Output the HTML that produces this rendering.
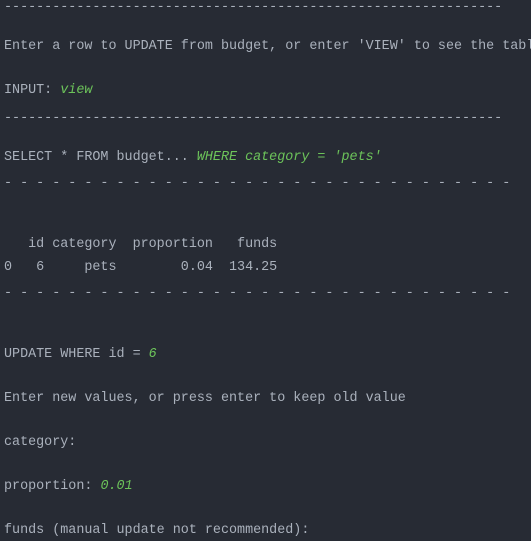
<!DOCTYPE html>
<html><head><style>
body{margin:0;background:#272b34;width:531px;height:541px;overflow:hidden;position:relative}
div{position:absolute;left:4px;white-space:pre;font-family:"Liberation Mono",monospace;font-size:13.4px;line-height:16px;color:#aab1bc}
i{color:#6cc35a}
</style></head><body>
<div style="top:0px">--------------------------------------------------------------</div>
<div style="top:39px">Enter a row to UPDATE from budget, or enter 'VIEW' to see the tabl</div>
<div style="top:83px">INPUT: <i>view</i></div>
<div style="top:111px">--------------------------------------------------------------</div>
<div style="top:150px">SELECT * FROM budget... <i>WHERE category = 'pets'</i></div>
<div style="top:176px">- - - - - - - - - - - - - - - - - - - - - - - - - - - - - - - -</div>
<div style="top:237px">   id category  proportion   funds</div>
<div style="top:260px">0   6     pets        0.04  134.25</div>
<div style="top:286px">- - - - - - - - - - - - - - - - - - - - - - - - - - - - - - - -</div>
<div style="top:347px">UPDATE WHERE id = <i>6</i></div>
<div style="top:391px">Enter new values, or press enter to keep old value</div>
<div style="top:435px">category:</div>
<div style="top:479px">proportion: <i>0.01</i></div>
<div style="top:523px">funds (manual update not recommended):</div>
</body></html>
